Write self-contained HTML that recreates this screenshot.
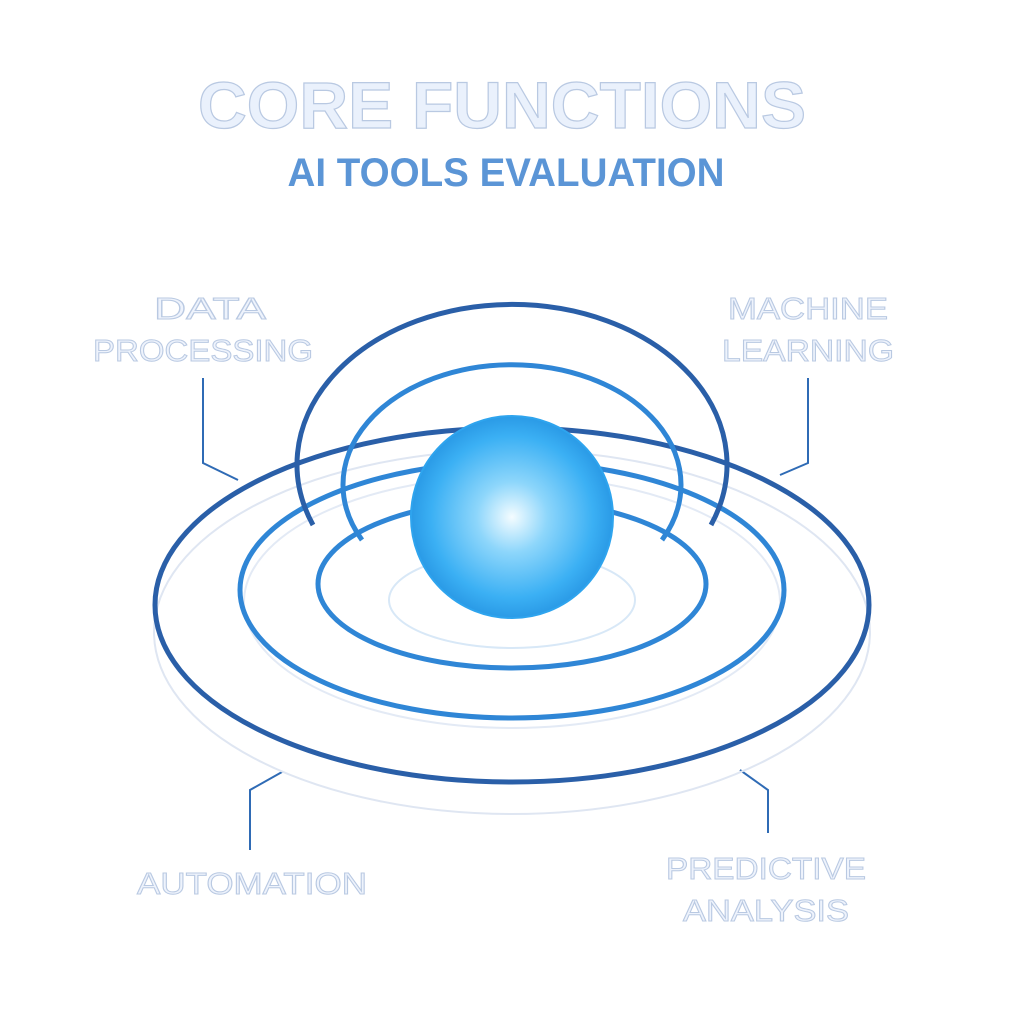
<!DOCTYPE html>
<html><head><meta charset="utf-8"><style>html,body{margin:0;padding:0;background:#fff}svg{display:block}</style></head>
<body>
<svg width="1024" height="1024" viewBox="0 0 1024 1024" xmlns="http://www.w3.org/2000/svg">
<defs>
<radialGradient id="sp" cx="0.5" cy="0.5" r="0.5">
<stop offset="0" stop-color="#f4fcff"/>
<stop offset="0.35" stop-color="#8dd6fb"/>
<stop offset="0.8" stop-color="#3bb0f4"/>
<stop offset="1" stop-color="#2a9ae6"/>
</radialGradient>
</defs>
<g font-family="Liberation Sans, sans-serif" font-weight="bold" text-anchor="middle">
<text x="502" y="128" font-size="66" fill="#eaf1fc" stroke="#b9c9e2" stroke-width="1.2" textLength="608" lengthAdjust="spacingAndGlyphs">CORE FUNCTIONS</text>
<text x="506" y="186" font-size="40" fill="#5b95d6" textLength="437" lengthAdjust="spacingAndGlyphs">AI TOOLS EVALUATION</text>
<g font-weight="normal" font-size="31" fill="#eef3fc" stroke="#b9c9e2" stroke-width="1">
<text x="210" y="319" textLength="112" lengthAdjust="spacingAndGlyphs">DATA</text>
<text x="203" y="361" textLength="220" lengthAdjust="spacingAndGlyphs">PROCESSING</text>
<text x="808" y="319" textLength="160" lengthAdjust="spacingAndGlyphs">MACHINE</text>
<text x="808" y="361" textLength="172" lengthAdjust="spacingAndGlyphs">LEARNING</text>
<text x="252" y="894" textLength="230" lengthAdjust="spacingAndGlyphs">AUTOMATION</text>
<text x="766" y="879" textLength="200" lengthAdjust="spacingAndGlyphs">PREDICTIVE</text>
<text x="766" y="921" textLength="166" lengthAdjust="spacingAndGlyphs">ANALYSIS</text>
</g>
</g>
<g fill="none">
<polyline points="203,378 203,463 238,480" stroke="#2f6bb5" stroke-width="2"/>
<polyline points="808,378 808,463 780,475" stroke="#2f6bb5" stroke-width="2"/>
<polyline points="250,850 250,790 282,772" stroke="#2f6bb5" stroke-width="2"/>
<polyline points="768,833 768,790 740,770" stroke="#2f6bb5" stroke-width="2"/>
<ellipse cx="512" cy="632" rx="358" ry="182" stroke="#dfe6f2" stroke-width="2"/>
<ellipse cx="512" cy="605" rx="357" ry="177" stroke="#2a5fa8" stroke-width="5"/>
<ellipse cx="512" cy="602" rx="268" ry="126" stroke="#e3eaf5" stroke-width="2"/>
<ellipse cx="512" cy="590" rx="272" ry="128" stroke="#2f86d6" stroke-width="5"/>
<ellipse cx="512" cy="584" rx="194" ry="84" stroke="#2f86d6" stroke-width="5"/>
<ellipse cx="512" cy="600" rx="123" ry="48" stroke="#d8e8f7" stroke-width="2"/>
<path d="M313,525 A215,160 0 1 1 711,525" stroke="#2a5fa8" stroke-width="5"/>
<path d="M362,540 A169,120 0 1 1 662,540" stroke="#2f86d6" stroke-width="5"/>
<circle cx="512" cy="517" r="101" fill="url(#sp)" stroke="#2ea4ee" stroke-width="2"/>
</g>
</svg>
</body></html>
